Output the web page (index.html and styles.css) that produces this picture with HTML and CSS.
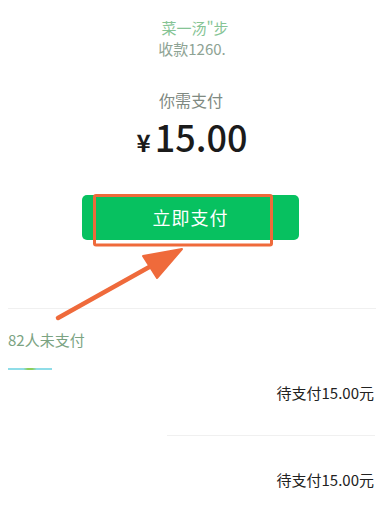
FILE: index.html
```html
<!DOCTYPE html>
<html lang="zh-CN">

<head>
    <meta charset="UTF-8">
    <meta name="viewport" content="width=device-width, initial-scale=1.0">
    <title>支付</title>
    <link rel="stylesheet" href="styles.css">
</head>

<body>
    <div class="page">
        <div class="top">
            <div class="l1">菜一汤"步</div>
            <div class="l2">收款1260.</div>
        </div>
        <div class="need">你需支付</div>
        <div class="amount"><span class="yen">¥</span>15.00</div>
        <div class="btn">立即支付</div>

        <div class="line"></div>
        <div class="unpaid">82人未支付</div>
        <div class="tick"></div>
        <div class="row">待支付15.00元</div>
        <div class="line short"></div>
        <div class="row">待支付15.00元</div>
    </div>

    <svg class="mark" width="388" height="509" viewBox="0 0 388 509">
        <rect x="94.5" y="195.5" width="177" height="49.5" rx="1.5" fill="none" stroke="#ef6a3b" stroke-width="3" />
        <line x1="58" y1="318" x2="160" y2="261" stroke="#ef6a3b" stroke-width="4.5" stroke-linecap="round" />
        <polygon points="182,249 143,256 157,278" fill="#ef6a3b" stroke="#ef6a3b" stroke-width="2" stroke-linejoin="round" />
    </svg>
</body>

</html>
```

FILE: styles.css
```css
body {
    margin: 0;
    background-color: #fff;
    font-family: "Noto Sans CJK SC", "Noto Sans", sans-serif;
}

.page {
    width: 388px;
    height: 509px;
    overflow: hidden;
    display: flex;
    flex-direction: column;
}

.top {
    padding-top: 17px;
    display: flex;
    flex-direction: column;
    align-items: center;
    font-size: 15px;
    line-height: 21px;
    white-space: nowrap;
}

.l1 {
    color: #86c495;
    padding-left: 2px;
}

.l2 {
    color: #8ea394;
    padding-right: 4px;
}

.need {
    margin-top: 30px;
    text-align: center;
    font-size: 16px;
    line-height: 22px;
    color: #7f8a82;
    padding-right: 6px;
}

.amount {
    margin-top: 3px;
    text-align: center;
    font-size: 36px;
    line-height: 44px;
    height: 44px;
    color: #1b1b1b;
    font-weight: 500;
    padding-right: 4px;
}

.yen {
    font-size: 24px;
    line-height: 0;
    font-weight: 700;
    margin-right: 4px;
}

.btn {
    margin: 37px 0 0 82px;
    width: 217px;
    height: 45px;
    border-radius: 5px;
    background-color: #07c160;
    color: #fff;
    font-size: 18px;
    line-height: 45px;
    text-align: center;
    letter-spacing: 1px;
}

.line {
    margin: 68px 12px 0 8px;
    height: 1px;
    background-color: #f0f0f0;
}

.line.short {
    margin: 32px 13px 0 167px;
}

.unpaid {
    margin: 20px 0 0 8px;
    font-size: 15px;
    line-height: 21px;
    color: #7ba382;
}

.tick {
    margin: 18px 0 0 8px;
    width: 44px;
    height: 2px;
    background: linear-gradient(90deg, #8fdde8 0%, #8fdde8 35%, #8ccf5a 45%, #8ccf5a 55%, #8fdde8 65%, #8fdde8 100%);
}

.row {
    margin-top: 12px;
    padding-right: 14px;
    text-align: right;
    font-size: 15px;
    line-height: 21px;
    color: #222;
}

.line.short + .row {
    margin-top: 33px;
}

.mark {
    position: absolute;
    left: 0;
    top: 0;
    pointer-events: none;
}
```
